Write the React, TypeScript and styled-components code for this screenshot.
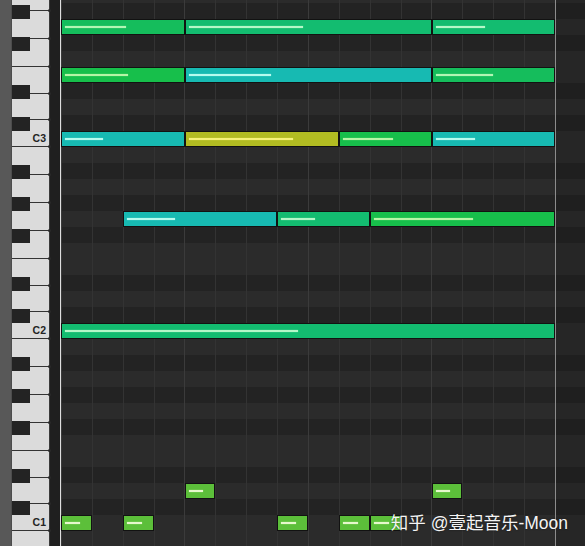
import React from "react";
import styled, { createGlobalStyle } from "styled-components";

const ROW = 16;
const BEAT = 30.875;
const BEATS = 16;
const LANE = BEAT * BEATS; // 494

const GlobalStyle = createGlobalStyle`
  html, body { margin: 0; padding: 0; background: #262626; overflow: hidden; }
  body { width: 585px; height: 546px; font-family: "Liberation Sans", Arial, sans-serif; }
`;

type Tone = "green" | "mid" | "teal" | "cyan" | "olive" | "lime";

const TONES: Record<Tone, { fill: string; line: string }> = {
  green: { fill: "#17bf4b", line: "#b6f5a6" },
  mid: { fill: "#15bd5c", line: "#b2f6b4" },
  teal: { fill: "#13bc70", line: "#b4f7c8" },
  cyan: { fill: "#17bab2", line: "#b6fbef" },
  olive: { fill: "#b2bc22", line: "#f6f27a" },
  lime: { fill: "#5cbf3a", line: "#e6f8cc" },
};

type NoteDef = [number, number, Tone, number];

const NOTES: Record<string, NoteDef[]> = {
  G3: [[0, 4, "mid", 61], [4, 8, "teal", 114], [12, 4, "teal", 49]],
  E3: [[0, 4, "green", 63], [4, 8, "cyan", 82], [12, 4, "mid", 57]],
  C3: [[0, 4, "cyan", 38], [4, 5, "olive", 104], [9, 3, "green", 50], [12, 4, "cyan", 39]],
  G2: [[2, 5, "cyan", 48], [7, 3, "teal", 34], [10, 6, "green", 99]],
  C2: [[0, 16, "teal", 233]],
  D1: [[4, 1, "lime", 14], [12, 1, "lime", 14]],
  C1: [[0, 1, "lime", 15], [2, 1, "lime", 15], [7, 1, "lime", 15], [9, 1, "lime", 15], [10, 1, "lime", 15]],
};

const NAMES = ["C", "C#", "D", "D#", "E", "F", "F#", "G", "G#", "A", "A#", "B"];

const PITCHES: string[] = [];
for (let oct = 3; oct >= 0; oct--) {
  for (let i = 11; i >= 0; i--) {
    if (oct === 0 && i !== 11) continue;
    PITCHES.push(NAMES[i] + oct);
  }
}

// white keys from top: B A G F (28px) E D C (80/3 px)
const WHITE_KEYS: { name: string; h: number }[] = [];
for (let oct = 3; oct >= 0; oct--) {
  const seq = oct === 0 ? ["B"] : ["B", "A", "G", "F", "E", "D", "C"];
  for (const n of seq) {
    WHITE_KEYS.push({ name: n + oct, h: "BAGF".includes(n) ? 28 : 80 / 3 });
  }
}

const Stage = styled.div`
  position: relative;
  width: 585px;
  height: 546px;
  overflow: hidden;
`;

const Shift = styled.div`
  display: flex;
  align-items: stretch;
  height: 620px;
  margin-top: -45px;
`;

const SideStrip = styled.div`
  width: 12px;
  flex: none;
  background: #585858;
  box-shadow: inset -1px 0 0 #4c4c4c;
`;

const Keyboard = styled.div`
  position: relative;
  width: 38px;
  flex: none;
  display: flex;
  flex-direction: column;
  background: #dbdbdb;
  box-shadow: inset -1px 0 0 #3a3a3a;
`;

const WhiteKey = styled.div<{ $h: number }>`
  position: relative;
  box-sizing: border-box;
  height: ${(p) => p.$h}px;
  flex: none;
  border-bottom: 1px solid #333;
  display: flex;
  align-items: flex-end;
  justify-content: flex-end;
  padding: 0 4px 2px 0;
  &::after {
    content: "";
    position: absolute;
    right: -1px;
    bottom: -2px;
    width: 3px;
    height: 3px;
    border-radius: 50%;
    background: #2a2a2a;
  }
`;

const KeyLabel = styled.span`
  font-family: "Liberation Sans", Arial, sans-serif;
  font-weight: 700;
  font-size: 10.5px;
  line-height: 1;
  color: #242424;
`;

const BlackKey = styled.div<{ $row: number }>`
  position: absolute;
  left: 0;
  top: ${(p) => p.$row * ROW + 2}px;
  width: 18px;
  height: 14px;
  background: #232323;
  z-index: 1;
`;

const Gutter = styled.div`
  width: 10px;
  flex: none;
  background: #1f1f1f;
  border-right: 1px solid #dedede;
`;

const Lanes = styled.div`
  flex: 1;
  display: flex;
  flex-direction: column;
`;

const Lane = styled.div<{ $black: boolean }>`
  position: relative;
  height: ${ROW}px;
  flex: none;
  background:
    linear-gradient(to right, transparent ${LANE}px, #8c8c8c ${LANE}px, #8c8c8c ${LANE + 1}px, rgba(0, 0, 0, 0.12) ${LANE + 1}px),
    repeating-linear-gradient(to right, #3b3b3b 0 1px, transparent 1px ${BEAT * 4}px),
    repeating-linear-gradient(to right, #333333 0 1px, transparent 1px ${BEAT}px),
    ${(p) => (p.$black ? "#232323" : "#2b2b2b")};
`;

const Note = styled.div<{ $tone: Tone }>`
  position: absolute;
  top: 0;
  height: ${ROW}px;
  box-sizing: border-box;
  border: 1px solid #121212;
  background: ${(p) => TONES[p.$tone].fill};
  display: flex;
  align-items: center;
  padding-left: 3px;
  z-index: 1;
`;

const Velocity = styled.div<{ $tone: Tone }>`
  height: 2px;
  background: ${(p) => TONES[p.$tone].line};
  box-shadow: 0 0 1px ${(p) => TONES[p.$tone].line};
`;

const Watermark = styled.div`
  position: absolute;
  right: 17px;
  bottom: 13px;
  font-family: "Liberation Sans", "Noto Sans CJK SC", sans-serif;
  font-size: 17.5px;
  line-height: 20px;
  color: #f4f4f4;
  text-shadow: 0 0 2px rgba(0, 0, 0, 0.5);
  white-space: nowrap;
  z-index: 5;
`;

export default function App() {
  return (
    <Stage>
      <GlobalStyle />
      <Shift>
        <SideStrip />
        <Keyboard>
          {WHITE_KEYS.map((k) => (
            <WhiteKey key={k.name} $h={k.h}>
              {k.name.startsWith("C") && <KeyLabel>{k.name}</KeyLabel>}
            </WhiteKey>
          ))}
          {PITCHES.map((p, i) =>
            p.includes("#") ? <BlackKey key={p} $row={i} /> : null
          )}
        </Keyboard>
        <Gutter />
        <Lanes>
          {PITCHES.map((p) => (
            <Lane key={p} $black={p.includes("#")}>
              {(NOTES[p] || []).map(([start, len, tone, vel], i) => (
                <Note
                  key={i}
                  $tone={tone}
                  style={{
                    left: Math.round(start * BEAT),
                    width: Math.round((start + len) * BEAT) - Math.round(start * BEAT),
                  }}
                >
                  <Velocity $tone={tone} style={{ width: vel }} />
                </Note>
              ))}
            </Lane>
          ))}
        </Lanes>
      </Shift>
      <Watermark>知乎 @壹起音乐-Moon</Watermark>
    </Stage>
  );
}
